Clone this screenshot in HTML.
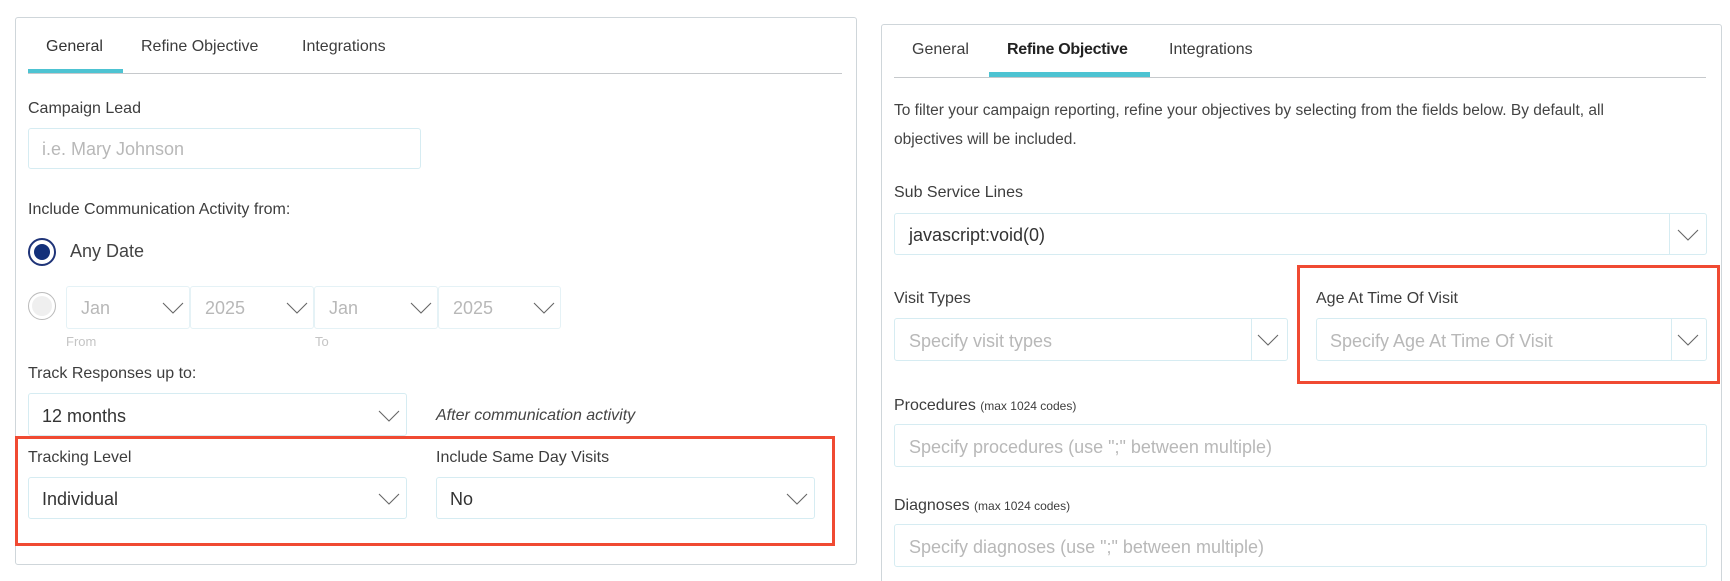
<!DOCTYPE html>
<html style="width:1730px;height:581px;overflow:hidden"><head><meta charset="utf-8"><style>
*{box-sizing:border-box;margin:0;padding:0}
body{width:1730px;height:581px;background:#fff;position:relative;overflow:hidden;font-family:"Liberation Sans",sans-serif;color:#3d3d3d}
.a{position:absolute}
.panel{position:absolute;border:1px solid #cfd6da;border-radius:3px;background:#fff}
.t{position:absolute;font-size:16px;line-height:20px;white-space:nowrap;color:#3d3d3d}
.box{position:absolute;border:1px solid #d6ecf2;border-radius:3px;background:#fff}
.ph{position:absolute;font-size:18px;line-height:22px;color:#b8b8b8;white-space:nowrap}
.val{position:absolute;font-size:18px;line-height:22px;color:#333;white-space:nowrap}
.chev{position:absolute;width:22px;height:12px}
.div{position:absolute;top:0;bottom:0;width:1px;background:#d6ecf2}
.red{position:absolute;border:3px solid #f04a32}
</style></head><body>
<svg width="0" height="0" style="position:absolute"><defs><symbol id="cv" viewBox="0 0 22 12"><path d="M1 1 L11 11 L21 1" fill="none" stroke="#666" stroke-width="1.1"/></symbol></defs></svg>

<!-- LEFT PANEL -->
<div class="panel" style="left:15px;top:17px;width:842px;height:548px"></div>
<div class="t" style="left:46px;top:37px;color:#333;">General</div>
<div class="t" style="left:141px;top:37px">Refine Objective</div>
<div class="t" style="left:302px;top:37px">Integrations</div>
<div class="a" style="left:28px;top:73px;width:814px;height:1px;background:#c6c9cc"></div>
<div class="a" style="left:28px;top:69px;width:95px;height:4px;background:#4dc3d2"></div>

<div class="t" style="left:28px;top:99px">Campaign Lead</div>
<div class="box" style="left:28px;top:128px;width:393px;height:41px"></div>
<div class="ph" style="left:42px;top:138px">i.e. Mary Johnson</div>

<div class="t" style="left:28px;top:200px">Include Communication Activity from:</div>
<div class="a" style="left:28px;top:238px;width:28px;height:28px;border:2px solid #1f3478;border-radius:50%;background:#fff"></div>
<div class="a" style="left:34px;top:244px;width:16px;height:16px;border-radius:50%;background:#13307a"></div>
<div class="val" style="left:70px;top:240px;color:#444">Any Date</div>

<div class="a" style="left:28px;top:292px;width:28px;height:28px;border:1px solid #bbb;border-radius:50%;background:#efefef;box-shadow:inset 0 0 0 3px #fff"></div>
<div class="box" style="left:66px;top:286px;width:124px;height:43px;border-color:#e5f2f6"></div>
<div class="ph" style="left:81px;top:297px">Jan</div><svg class="chev" style="left:162px;top:302px"><use href="#cv"/></svg>
<div class="box" style="left:190px;top:286px;width:124px;height:43px;border-color:#e5f2f6"></div>
<div class="ph" style="left:205px;top:297px">2025</div><svg class="chev" style="left:286px;top:302px"><use href="#cv"/></svg>
<div class="box" style="left:314px;top:286px;width:124px;height:43px;border-color:#e5f2f6"></div>
<div class="ph" style="left:329px;top:297px">Jan</div><svg class="chev" style="left:410px;top:302px"><use href="#cv"/></svg>
<div class="box" style="left:438px;top:286px;width:123px;height:43px;border-color:#e5f2f6"></div>
<div class="ph" style="left:453px;top:297px">2025</div><svg class="chev" style="left:533px;top:302px"><use href="#cv"/></svg>
<div class="t" style="left:66px;top:332px;font-size:13px;color:#c4c4c4">From</div>
<div class="t" style="left:315px;top:332px;font-size:13px;color:#c4c4c4">To</div>

<div class="t" style="left:28px;top:364px">Track Responses up to:</div>
<div class="box" style="left:28px;top:393px;width:379px;height:43px"></div>
<div class="val" style="left:42px;top:405px">12 months</div><svg class="chev" style="left:378px;top:410px"><use href="#cv"/></svg>
<div class="t" style="left:436px;top:406px;font-style:italic;color:#444">After communication activity</div>

<div class="red" style="left:15px;top:436px;width:820px;height:110px"></div>
<div class="t" style="left:28px;top:448px">Tracking Level</div>
<div class="box" style="left:28px;top:477px;width:379px;height:42px"></div>
<div class="val" style="left:42px;top:488px">Individual</div><svg class="chev" style="left:378px;top:493px"><use href="#cv"/></svg>
<div class="t" style="left:436px;top:448px">Include Same Day Visits</div>
<div class="box" style="left:436px;top:477px;width:379px;height:42px"></div>
<div class="val" style="left:450px;top:488px">No</div><svg class="chev" style="left:786px;top:493px"><use href="#cv"/></svg>

<!-- RIGHT PANEL -->
<div class="panel" style="left:881px;top:24px;width:841px;height:562px"></div>
<div class="t" style="left:912px;top:40px">General</div>
<div class="t" style="left:1007px;top:40px;color:#222;font-weight:bold;letter-spacing:-0.3px">Refine Objective</div>
<div class="t" style="left:1169px;top:40px">Integrations</div>
<div class="a" style="left:894px;top:77px;width:812px;height:1px;background:#c6c9cc"></div>
<div class="a" style="left:989px;top:72px;width:161px;height:5px;background:#4dc3d2"></div>

<div class="t" style="left:894px;top:101px;font-size:15.5px;color:#444">To filter your campaign reporting, refine your objectives by selecting from the fields below. By default, all</div>
<div class="t" style="left:894px;top:130px;font-size:15.5px;color:#444">objectives will be included.</div>

<div class="t" style="left:894px;top:183px">Sub Service Lines</div>
<div class="box" style="left:894px;top:213px;width:813px;height:42px"><div class="div" style="left:774px"></div></div>
<div class="val" style="left:909px;top:224px">javascript:void(0)</div><svg class="chev" style="left:1677px;top:229px"><use href="#cv"/></svg>

<div class="t" style="left:894px;top:289px">Visit Types</div>
<div class="box" style="left:894px;top:318px;width:394px;height:43px"><div class="div" style="left:356px"></div></div>
<div class="ph" style="left:909px;top:330px">Specify visit types</div><svg class="chev" style="left:1257px;top:334px"><use href="#cv"/></svg>

<div class="red" style="left:1297px;top:265px;width:423px;height:119px"></div>
<div class="t" style="left:1316px;top:289px">Age At Time Of Visit</div>
<div class="box" style="left:1316px;top:318px;width:391px;height:43px"><div class="div" style="left:354px"></div></div>
<div class="ph" style="left:1330px;top:330px">Specify Age At Time Of Visit</div><svg class="chev" style="left:1677px;top:334px"><use href="#cv"/></svg>

<div class="t" style="left:894px;top:396px">Procedures <span style="font-size:12px">(max 1024 codes)</span></div>
<div class="box" style="left:894px;top:424px;width:813px;height:43px"></div>
<div class="ph" style="left:909px;top:436px">Specify procedures (use ";" between multiple)</div>

<div class="t" style="left:894px;top:496px">Diagnoses <span style="font-size:12px">(max 1024 codes)</span></div>
<div class="box" style="left:894px;top:524px;width:813px;height:43px"></div>
<div class="ph" style="left:909px;top:536px">Specify diagnoses (use ";" between multiple)</div>
</body></html>
